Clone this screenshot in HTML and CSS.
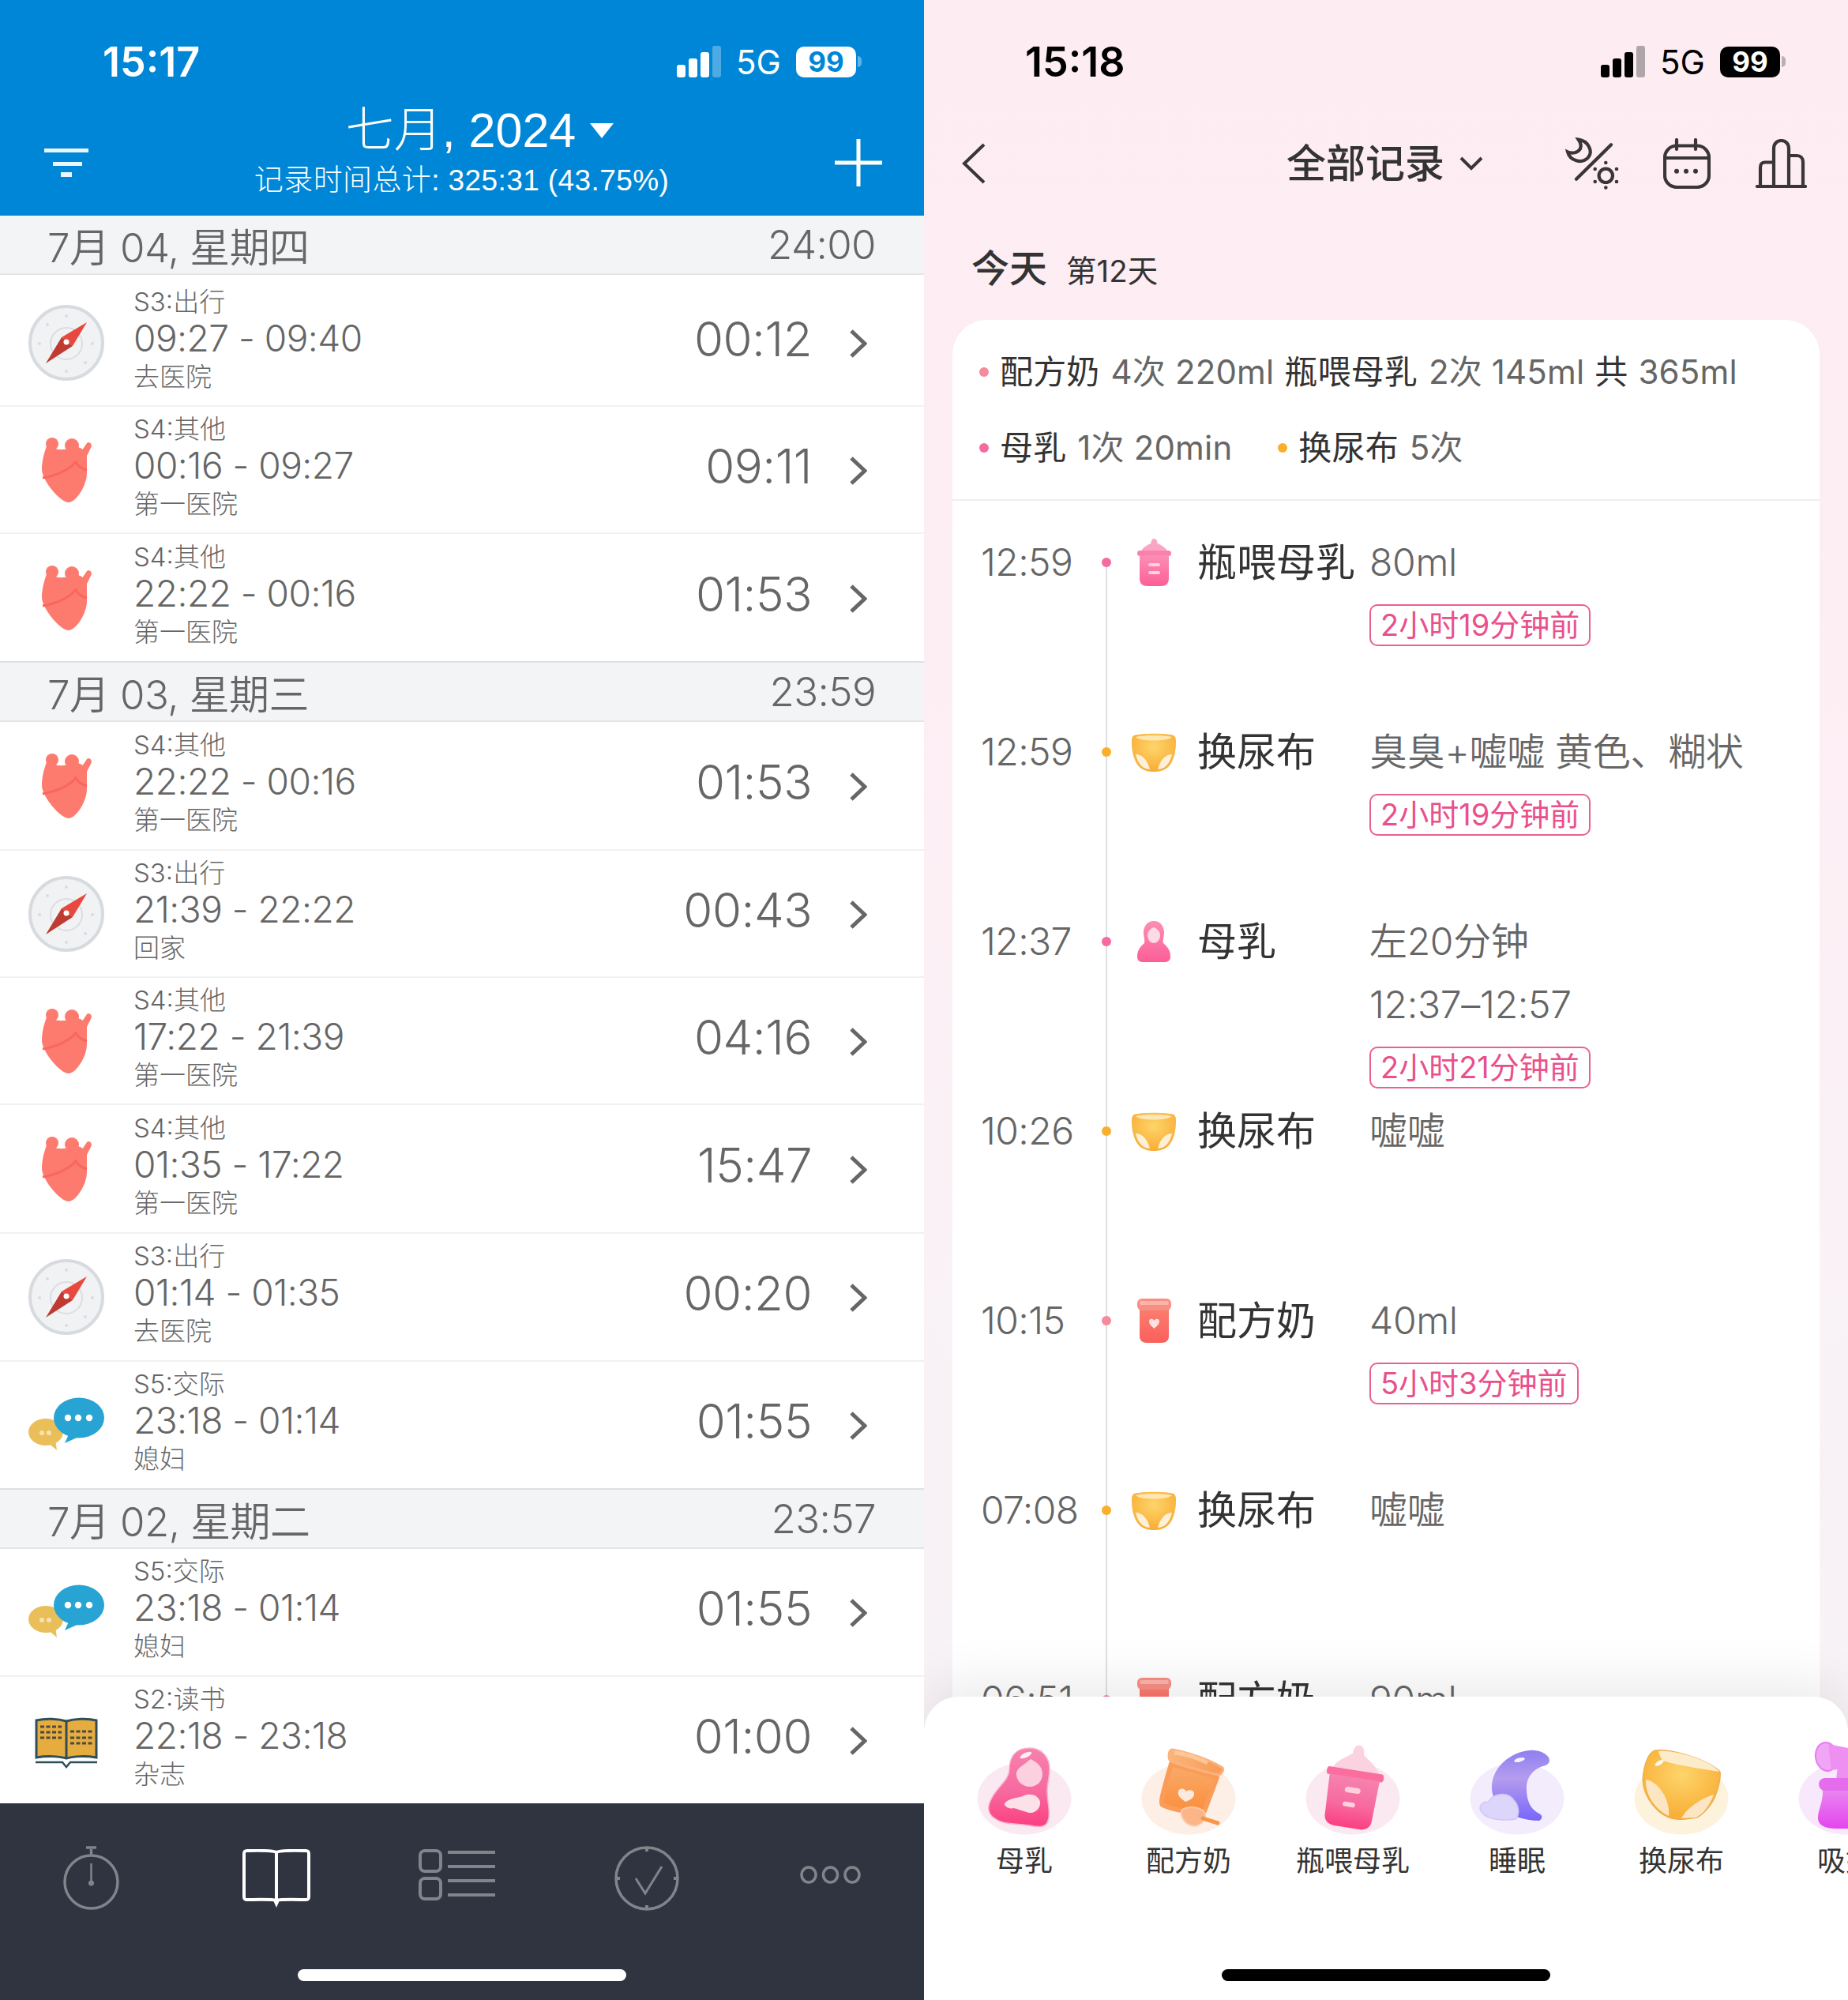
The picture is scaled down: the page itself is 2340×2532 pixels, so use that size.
FILE: index.html
```html
<!DOCTYPE html>
<html lang="zh">
<head>
<meta charset="utf-8">
<title>Records</title>
<link rel="stylesheet" href="styles.css">
</head>
<body>
<svg class="defs" xmlns="http://www.w3.org/2000/svg">
  <defs>
    <linearGradient id="gPink" x1="0" y1="0" x2="0" y2="1"><stop offset="0" stop-color="#f682ae"/><stop offset=".55" stop-color="#f76a9f"/><stop offset="1" stop-color="#fb3f80"/></linearGradient>
    <linearGradient id="gOrange" x1="0" y1="0" x2="0" y2="1"><stop offset="0" stop-color="#f9ab6a"/><stop offset="1" stop-color="#fb8f3e"/></linearGradient>
    <linearGradient id="gRim" x1="0" y1="0" x2="1" y2="0"><stop offset="0" stop-color="#fab57a"/><stop offset="1" stop-color="#f99a55"/></linearGradient>
    <linearGradient id="gMoon" x1="0" y1="0" x2="0" y2="1"><stop offset="0" stop-color="#8f7ff0"/><stop offset=".4" stop-color="#b49cee"/><stop offset="1" stop-color="#7866fa"/></linearGradient>
    <radialGradient id="gDiaper" cx=".5" cy=".35" r=".7"><stop offset="0" stop-color="#fdd56a"/><stop offset="1" stop-color="#f8a930"/></radialGradient>
    <linearGradient id="gPump" x1="0" y1="0" x2="0" y2="1"><stop offset="0" stop-color="#eb8cf2"/><stop offset="1" stop-color="#e345ee"/></linearGradient>
    <linearGradient id="gCan" x1="0" y1="0" x2="0" y2="1"><stop offset="0" stop-color="#fb7f72"/><stop offset="1" stop-color="#fb5f5b"/></linearGradient>
    <linearGradient id="gMiniBottle" x1="0" y1="0" x2="0" y2="1"><stop offset="0" stop-color="#fb8fb6"/><stop offset="1" stop-color="#fc5e96"/></linearGradient>

    <symbol id="compass" viewBox="0 0 96 96">
      <circle cx="48" cy="48" r="46" fill="#f1f2f4" stroke="#d7dbe0" stroke-width="4"/>
      <circle cx="48" cy="49" r="20" fill="none" stroke="#d9dde2" stroke-width="2"/>
      <g fill="#d9dde2"><circle cx="48" cy="14" r="2"/><circle cx="48" cy="84" r="2"/><circle cx="14" cy="49" r="2"/><circle cx="81" cy="49" r="2"/><circle cx="24" cy="25" r="2"/><circle cx="72" cy="73" r="2"/></g>
      <path d="M74 22 L56 52 L42 41 Z" fill="#e8493f"/>
      <path d="M22 74 L42 41 L56 52 Z" fill="#bf3a30"/>
      <circle cx="48" cy="47" r="3.500" fill="#fff"/>
    </symbol>
    <symbol id="heart" viewBox="0 0 96 96">
      <circle cx="30" cy="15" r="8" fill="#fd7b6e"/><circle cx="55" cy="17" r="9" fill="#fd7b6e"/>
      <path d="M66 26L74 14C77 11 82 16 79 20L72 34Z" fill="#fd7b6e"/>
      <path d="M23 18C32 22 44 24 52 20C60 16 70 20 74 28L74 52C74 68 60 89 51 89C40 89 18 62 17 48C17 36 20 26 23 18Z" fill="#fd7b6e"/>
      <path d="M18 58C35 55 50 49 60 38C62 42 66 46 74 48" fill="none" stroke="#f8675f" stroke-width="3"/>
    </symbol>
    <symbol id="chat" viewBox="0 0 96 96">
      <ellipse cx="22" cy="57" rx="22" ry="17" fill="#eabf5a"/>
      <path d="M24 70L36 80L34 66Z" fill="#eabf5a"/>
      <circle cx="17" cy="58" r="3" fill="#f7e3b0"/><circle cx="26" cy="58" r="3" fill="#f7e3b0"/>
      <ellipse cx="64" cy="39" rx="32" ry="25.500" fill="#27a4d4"/>
      <path d="M52 58L46 71L66 62Z" fill="#27a4d4"/>
      <circle cx="50" cy="39" r="4.200" fill="#fff"/><circle cx="63" cy="39" r="4.200" fill="#fff"/><circle cx="77" cy="39" r="4.200" fill="#fff"/>
    </symbol>
    <symbol id="book" viewBox="0 -14 96 96">
      <path d="M10 9C22 6 38 7 48 10C58 7 74 6 86 9V56C74 54 58 54 48 57C38 54 22 54 10 56Z" fill="#e6ac3f" stroke="#2f4f58" stroke-width="3"/>
      <path d="M48 10V57" stroke="#2f4f58" stroke-width="3"/>
      <g stroke="#4a4a40" stroke-width="3" stroke-dasharray="5 2.500"><path d="M15 17H42M15 24H42M15 31H42M53 23H81M53 31H81M53 38H81"/></g>
      <path d="M9 62H43L48 68L53 62H87" fill="none" stroke="#2f4f58" stroke-width="2.500"/>
    </symbol>

    <symbol id="miniBottle" viewBox="0 0 43 60">
      <path d="M21.500 0C24.500 0 25.500 3 25.500 6C31 8 38 12 39 19H4C5 12 12 8 17.500 6C17.500 3 18.500 0 21.500 0Z" fill="#fba5c4"/>
      <rect x="0" y="15" width="43" height="7" rx="3.500" fill="#fb80ac"/>
      <path d="M3 21H40V50C40 57 36 60 30 60H13C7 60 3 57 3 50Z" fill="url(#gMiniBottle)"/>
      <rect x="14" y="31" width="15" height="4" rx="2" fill="#fdd0df"/><rect x="14" y="41" width="15" height="4" rx="2" fill="#fdd0df"/>
    </symbol>
    <symbol id="miniDiaper" viewBox="0 0 56 49">
      <path d="M3 3C12 0 44 0 53 3C56 5 56 8 56 12C56 26 52 38 45 44C40 48 34 49 28 49C22 49 16 48 11 44C4 38 0 26 0 12C0 8 0 5 3 3Z" fill="url(#gDiaper)"/>
      <path d="M5 5C12 2.500 44 2.500 51 5C47 8.500 38 9.500 28 9.500C18 9.500 9 8.500 5 5Z" fill="#fde6b4"/>
      <path d="M5 27C13 27 20 34 23 46C15 46 8 40 5 27Z" fill="#fdf0d8"/><path d="M51 27C43 27 36 34 33 46C41 46 48 40 51 27Z" fill="#fdf0d8"/>
    </symbol>
    <symbol id="miniMother" viewBox="0 0 42 52">
      <path d="M21 0C30 0 34 8 34 14C34 20 32 24 33 28C39 33 42 38 42 45C42 50 39 52 35 52H7C3 52 0 50 0 45C0 38 3 33 9 28C10 24 8 20 8 14C8 8 12 0 21 0Z" fill="url(#gMiniBottle)"/>
      <path d="M21 8C26 10 29 14 29 18C29 24 25 28 21 28C17 28 13 24 13 18C13 14 16 10 21 8Z" fill="#fddbe6"/>
    </symbol>
    <symbol id="miniCan" viewBox="0 0 43 56">
      <path d="M3 10H40V48C40 53 36 56 31 56H12C7 56 3 53 3 48Z" fill="url(#gCan)"/>
      <rect x="0" y="0" width="43" height="15" rx="6" fill="#f98e84"/>
      <rect x="3" y="3" width="37" height="5" rx="2.500" fill="#fbb3aa"/>
      <path d="M21.500 38C17 34 15 32 15 29C15 25 20 25 21.500 28C23 25 28 25 28 29C28 32 26 34 21.500 38Z" fill="#fde3e0"/>
    </symbol>

    <symbol id="bigMother" viewBox="0 0 120 120">
      <path d="M67 8C82 8 92 20 92 34C92 46 89 52 89 62C89 78 94 90 90 100C88 108 80 108 72 107C55 103 35 106 24 98C10 90 14 78 22 66C30 54 40 48 41 36C41 18 50 8 67 8Z" fill="url(#gPink)" stroke="#fbb3cd" stroke-width="1.500"/>
      <path d="M68 22C74 25 83 30 83 41C83 50 76 57 67 57C58 57 50 50 50 41C50 33 58 31 68 22Z" fill="#fcd0de"/>
      <path d="M35 78C42 70 52 72 60 68C68 65 78 68 80 76C81 84 74 91 66 90C58 88 52 85 46 84C42 86 34 82 35 78Z" fill="#fde1e8"/>
      <ellipse cx="62" cy="17" rx="8" ry="3" transform="rotate(-25 62 17)" fill="#fff" opacity=".85"/>
    </symbol>
    <symbol id="bigCan" viewBox="0 0 120 120">
      <path d="M38 28L96 45L80 88C62 90 40 86 27 80C24 78 26 70 38 28Z" fill="url(#gOrange)" stroke="#fa9c58" stroke-width="6" stroke-linejoin="round"/>
      <path d="M39 10C58 13 88 23 103 33C105 36 102 41 98 42C80 38 54 31 38 25C34 23 34 11 39 10Z" fill="url(#gRim)" stroke="#fbb27c" stroke-width="3" stroke-linejoin="round"/>
      <path d="M42 14C56 15 72 21 84 27" fill="none" stroke="#fcd3ab" stroke-width="5" opacity=".7"/>
      <path d="M56 76C49 71 46 68 47 63C49 58 55 59 57 63C60 60 67 61 67 66C67 71 62 74 56 76Z" fill="#fdeade"/>
      <path d="M52 86C62 80 80 84 81 92C81 102 72 108 64 106C56 104 48 94 52 86Z" fill="#fbb588" stroke="#fcc8a5" stroke-width="2"/>
      <path d="M78 97L97 103" stroke="#f89648" stroke-width="5" stroke-linecap="round"/>
    </symbol>
    <symbol id="bigBottle" viewBox="0 0 120 120">
      <g transform="rotate(9 60 60)">
        <path d="M60 4C65 4 67 9 67 15C72 20 86 26 90 38H30C34 26 48 20 53 15C53 9 55 4 60 4Z" fill="#fbd3e0"/>
        <path d="M26 36H94C97 36 98 46 94 46H26C23 46 23 36 26 36Z" fill="#fb6d9f"/>
        <path d="M28 45H92L90 96C90 105 84 109 76 109H44C36 109 30 105 30 96Z" fill="url(#gPink)"/>
        <rect x="50" y="58" width="20" height="7" rx="3.500" fill="#fdd0de"/><rect x="50" y="77" width="16" height="6" rx="3" fill="#fdd0de"/>
      </g>
    </symbol>
    <symbol id="bigMoon" viewBox="0 0 120 120">
      <path d="M100 20C96 14 86 10 76 11C52 13 28 32 28 58C28 85 60 100 88 100C93 97 92 93 88 91C74 84 72 70 72 58C72 44 82 33 96 30C101 28 102 24 100 20Z" fill="url(#gMoon)"/>
      <path d="M16 90C10 84 14 76 24 76C28 66 48 62 56 74C62 80 64 92 58 98C46 100 24 100 16 90Z" fill="#dcd6fa" stroke="#cfc6f6" stroke-width="1.500"/>
      <ellipse cx="63" cy="23" rx="7" ry="2.500" transform="rotate(-15 63 23)" fill="#fff" opacity=".9"/>
    </symbol>
    <symbol id="bigDiaper" viewBox="0 0 120 120">
      <path d="M26 11C18 14 12 30 11 48C12 70 30 95 52 98C60 99 70 98 80 96C90 90 100 78 104 66C108 55 110 45 109 38C95 24 50 8 26 11Z" fill="url(#gDiaper)" stroke="#e9ad4e" stroke-width="1.200"/>
      <path d="M31 12C50 10 95 22 108 38C95 36 55 30 36 24C34 20 32 16 31 12Z" fill="#fdecca"/>
      <path d="M15 48C30 50 46 72 44 94C30 88 14 70 15 48Z" fill="#fbe5c2"/>
      <path d="M60 97C66 85 84 72 101 67C96 80 88 92 78 96Z" fill="#fbe5c2"/>
      <ellipse cx="32" cy="27" rx="6" ry="2.500" transform="rotate(-30 32 27)" fill="#fff" opacity=".9"/>
    </symbol>
    <symbol id="bigPump" viewBox="0 0 120 120">
      <path d="M50 30C60 32 70 32 84 32V48H48Z" fill="#ee8ff2"/>
      <ellipse cx="36" cy="19" rx="14" ry="18" transform="rotate(-10 36 19)" fill="#f0a6f4" stroke="#e77cf0" stroke-width="2"/>
      <path d="M38 3L84 12V30L42 36Z" fill="#ee8ff2"/>
      <path d="M30 56C34 74 24 86 25 98C26 106 34 110 48 110H98V56Z" fill="url(#gPump)"/>
      <rect x="26" y="46" width="90" height="16" rx="8" fill="#e56ded"/>
    </symbol>

    <symbol id="signal" viewBox="0 0 56 40">
      <rect x="0" y="24" width="11" height="16" rx="3"/><rect x="15" y="16" width="11" height="24" rx="3"/><rect x="30" y="8" width="11" height="32" rx="3"/><rect x="45" y="0" width="11" height="40" rx="3" opacity=".3"/>
    </symbol>
  </defs>
</svg>

<section class="panel left">
  <header class="app-head">
    <div class="status on-blue">
      <span class="clock">15:17</span>
      <span class="status-right">
        <svg class="sig"><use href="#signal"/></svg>
        <span class="net">5G</span>
        <span class="batt">99</span><i class="nub"></i>
      </span>
    </div>
    <div class="app-nav">
      <svg class="filter" viewBox="0 0 56 36"><g fill="#eaf5fc"><rect x="0" y="0" width="56" height="5"/><rect x="11" y="17" width="37" height="5"/><rect x="21" y="30" width="14" height="6"/></g></svg>
      <div class="app-title">
        <div class="month"><span>七月, 2024</span><i class="tri"></i></div>
        <div class="total">记录时间总计: 325:31 (43.75%)</div>
      </div>
      <svg class="plus" viewBox="0 0 60 60"><path d="M30 0V60M0 30H60" stroke="#fff" stroke-width="5"/></svg>
    </div>
  </header>

  <main class="list">
    <div class="day"><span>7月 04, 星期四</span><span>24:00</span></div>
    <article class="row h167"><svg class="ri"><use href="#compass"/></svg><div class="rt"><div class="cat">S3:出行</div><div class="tm">09:27 - 09:40</div><div class="note">去医院</div></div><div class="dur">00:12</div><svg class="chev" viewBox="0 0 22 36"><path d="M2 2L19 18L2 34"/></svg></article>
    <article class="row"><svg class="ri"><use href="#heart"/></svg><div class="rt"><div class="cat">S4:其他</div><div class="tm">00:16 - 09:27</div><div class="note">第一医院</div></div><div class="dur">09:11</div><svg class="chev" viewBox="0 0 22 36"><path d="M2 2L19 18L2 34"/></svg></article>
    <article class="row h163 end"><svg class="ri"><use href="#heart"/></svg><div class="rt"><div class="cat">S4:其他</div><div class="tm">22:22 - 00:16</div><div class="note">第一医院</div></div><div class="dur">01:53</div><svg class="chev" viewBox="0 0 22 36"><path d="M2 2L19 18L2 34"/></svg></article>

    <div class="day"><span>7月 03, 星期三</span><span>23:59</span></div>
    <article class="row h163"><svg class="ri"><use href="#heart"/></svg><div class="rt"><div class="cat">S4:其他</div><div class="tm">22:22 - 00:16</div><div class="note">第一医院</div></div><div class="dur">01:53</div><svg class="chev" viewBox="0 0 22 36"><path d="M2 2L19 18L2 34"/></svg></article>
    <article class="row"><svg class="ri"><use href="#compass"/></svg><div class="rt"><div class="cat">S3:出行</div><div class="tm">21:39 - 22:22</div><div class="note">回家</div></div><div class="dur">00:43</div><svg class="chev" viewBox="0 0 22 36"><path d="M2 2L19 18L2 34"/></svg></article>
    <article class="row"><svg class="ri"><use href="#heart"/></svg><div class="rt"><div class="cat">S4:其他</div><div class="tm">17:22 - 21:39</div><div class="note">第一医院</div></div><div class="dur">04:16</div><svg class="chev" viewBox="0 0 22 36"><path d="M2 2L19 18L2 34"/></svg></article>
    <article class="row h163"><svg class="ri"><use href="#heart"/></svg><div class="rt"><div class="cat">S4:其他</div><div class="tm">01:35 - 17:22</div><div class="note">第一医院</div></div><div class="dur">15:47</div><svg class="chev" viewBox="0 0 22 36"><path d="M2 2L19 18L2 34"/></svg></article>
    <article class="row h162"><svg class="ri"><use href="#compass"/></svg><div class="rt"><div class="cat">S3:出行</div><div class="tm">01:14 - 01:35</div><div class="note">去医院</div></div><div class="dur">00:20</div><svg class="chev" viewBox="0 0 22 36"><path d="M2 2L19 18L2 34"/></svg></article>
    <article class="row h162 end"><svg class="ri"><use href="#chat"/></svg><div class="rt"><div class="cat">S5:交际</div><div class="tm">23:18 - 01:14</div><div class="note">媳妇</div></div><div class="dur">01:55</div><svg class="chev" viewBox="0 0 22 36"><path d="M2 2L19 18L2 34"/></svg></article>

    <div class="day"><span>7月 02, 星期二</span><span>23:57</span></div>
    <article class="row h162"><svg class="ri"><use href="#chat"/></svg><div class="rt"><div class="cat">S5:交际</div><div class="tm">23:18 - 01:14</div><div class="note">媳妇</div></div><div class="dur">01:55</div><svg class="chev" viewBox="0 0 22 36"><path d="M2 2L19 18L2 34"/></svg></article>
    <article class="row last"><svg class="ri"><use href="#book"/></svg><div class="rt"><div class="cat">S2:读书</div><div class="tm">22:18 - 23:18</div><div class="note">杂志</div></div><div class="dur">01:00</div><svg class="chev" viewBox="0 0 22 36"><path d="M2 2L19 18L2 34"/></svg></article>
  </main>

  <nav class="tabs">
    <div class="tab-row">
      <svg class="t-watch" viewBox="0 0 71 81" fill="none" stroke="#80848b" stroke-width="3.500"><circle cx="35.500" cy="45.500" r="33.500"/><path d="M35.500 12V4M29 2H42" /><path d="M35.500 22V44" stroke-width="2.500"/><circle cx="35.500" cy="47" r="3.500" fill="#80848b" stroke="none"/></svg>
      <svg class="t-book" viewBox="0 0 86 74" fill="none" stroke="#fff" stroke-width="4"><path d="M43 4C37 1 10 2 6 2C3 2 2 3 2 6V60C2 63 3 64 6 64C14 64 37 63 43 65C49 63 72 64 80 64C83 64 84 63 84 60V6C84 3 83 2 80 2C76 2 49 1 43 4ZM43 4V65"/><path d="M39 65H47L43 74Z" fill="#fff" stroke="none"/></svg>
      <svg class="t-list" viewBox="0 0 97 65" fill="none" stroke="#80848b" stroke-width="4"><rect x="2" y="2" width="26" height="26" rx="6"/><rect x="2" y="37" width="26" height="26" rx="6"/><path d="M37 4H97M37 22H97M37 40H97M37 58H97"/></svg>
      <svg class="t-check" viewBox="0 0 82 82" fill="none" stroke="#80848b" stroke-width="3.500"><circle cx="41" cy="41" r="39"/><path d="M41 2V7M41 75V80M2 41H7M75 41H80" stroke-width="4"/><path d="M27 41L39 60L60 26" stroke-width="3"/></svg>
      <svg class="t-dots" viewBox="0 0 77 23" fill="none" stroke="#80848b" stroke-width="3.500"><ellipse cx="11" cy="11.500" rx="9" ry="9.500"/><ellipse cx="38.500" cy="11.500" rx="9" ry="9.500"/><ellipse cx="66" cy="11.500" rx="9" ry="9.500"/></svg>
    </div>
    <div class="home-bar light"></div>
  </nav>
</section>

<section class="panel right">
  <div class="status on-pink">
    <span class="clock">15:18</span>
    <span class="status-right">
      <svg class="sig"><use href="#signal"/></svg>
      <span class="net">5G</span>
      <span class="batt">99</span><i class="nub"></i>
    </span>
  </div>
  <div class="rec-nav">
    <svg class="back" viewBox="0 0 30 52"><path d="M28 2L3 26L28 50"/></svg>
    <div class="rec-title">全部记录</div>
    <svg class="down" viewBox="0 0 32 18"><path d="M3 2L16 15L29 2"/></svg>
    <svg class="ni moon" viewBox="0 0 70 66" fill="none"><path d="M17.700 2.700C30 4.300 36.700 17.700 30 25.300C21.700 34.300 6.700 29.300 4 18.300C10 21 16.700 19.300 20 14.300C21.700 10 20 6 17.700 2.700Z"/><path d="M15 52.700L59 9.300"/><circle cx="52.300" cy="48.300" r="8.700"/><g fill="#3a3536" stroke="none"><circle cx="52.300" cy="32" r="2.300"/><circle cx="66" cy="40" r="2.300"/><circle cx="66" cy="56" r="2.300"/><circle cx="52.300" cy="63.500" r="2.300"/><circle cx="38.700" cy="56" r="2.300"/><circle cx="38.700" cy="40" r="2.300"/></g></svg>
    <svg class="ni cal" viewBox="0 0 60 64" fill="none"><rect x="2" y="9.500" width="56" height="52.500" rx="15"/><path d="M17 2V14M41 2V14M2 25H58"/><g fill="#3a3536" stroke="none"><circle cx="17" cy="41.700" r="3"/><circle cx="29" cy="41.700" r="3"/><circle cx="41" cy="41.700" r="3"/></g></svg>
    <svg class="ni chart" viewBox="0 0 65 62" fill="none"><path d="M2 60H63"/><path d="M6 60V36C6 32 8 29.500 12 29.500H23M23 60V12C23 6 27 2 32.500 2C38 2 42 6 42 12V60M42 21H52C57 21 60 24 60 29V60"/></svg>
  </div>
  <div class="today"><span class="t-big">今天</span><span class="t-small">第12天</span></div>

  <div class="card">
    <div class="summary">
      <div class="sum-line"><i class="dot coral"></i><b>配方奶</b><span class="m1">4次</span><span class="m2">220ml</span><b class="m3">瓶喂母乳</b><span class="m1">2次</span><span class="m2">145ml</span><b class="m3">共</b><span class="m3">365ml</span></div>
      <div class="sum-line"><i class="dot pink"></i><b>母乳</b><span class="m1">1次</span><span class="m2">20min</span><i class="dot amber gap"></i><b>换尿布</b><span class="m1">5次</span></div>
    </div>
    <div class="timeline">
      <div class="tl-row"><div class="tl-time">12:59</div><div class="tl-axis pink"><i></i></div><div class="tl-ibox"><svg class="mi-bottle"><use href="#miniBottle"/></svg></div><div class="tl-name">瓶喂母乳</div><div class="tl-val"><div>80ml</div><div class="tl-tagline"><span class="tag">2小时19分钟前</span></div></div></div>
      <div class="tl-row"><div class="tl-time">12:59</div><div class="tl-axis amber"><i></i></div><div class="tl-ibox"><svg class="mi-diaper"><use href="#miniDiaper"/></svg></div><div class="tl-name">换尿布</div><div class="tl-val"><div>臭臭+嘘嘘 黄色、糊状</div><div class="tl-tagline"><span class="tag">2小时19分钟前</span></div></div></div>
      <div class="tl-row"><div class="tl-time">12:37</div><div class="tl-axis pink"><i></i></div><div class="tl-ibox"><svg class="mi-mother"><use href="#miniMother"/></svg></div><div class="tl-name">母乳</div><div class="tl-val"><div>左20分钟</div><div>12:37–12:57</div><div class="tl-tagline"><span class="tag">2小时21分钟前</span></div></div></div>
      <div class="tl-row"><div class="tl-time">10:26</div><div class="tl-axis amber"><i></i></div><div class="tl-ibox"><svg class="mi-diaper"><use href="#miniDiaper"/></svg></div><div class="tl-name">换尿布</div><div class="tl-val"><div>嘘嘘</div></div></div>
      <div class="tl-row"><div class="tl-time">10:15</div><div class="tl-axis coral"><i></i></div><div class="tl-ibox"><svg class="mi-can"><use href="#miniCan"/></svg></div><div class="tl-name">配方奶</div><div class="tl-val"><div>40ml</div><div class="tl-tagline"><span class="tag">5小时3分钟前</span></div></div></div>
      <div class="tl-row"><div class="tl-time">07:08</div><div class="tl-axis amber"><i></i></div><div class="tl-ibox"><svg class="mi-diaper"><use href="#miniDiaper"/></svg></div><div class="tl-name">换尿布</div><div class="tl-val"><div>嘘嘘</div></div></div>
      <div class="tl-row"><div class="tl-time">06:51</div><div class="tl-axis coral"><i></i></div><div class="tl-ibox"><svg class="mi-can"><use href="#miniCan"/></svg></div><div class="tl-name">配方奶</div><div class="tl-val"><div>90ml</div></div></div>
    </div>
  </div>

  <div class="sheet">
    <div class="shortcuts">
      <div class="sc"><svg class="sc-i bg-pink"><use href="#bigMother"/></svg><span>母乳</span></div>
      <div class="sc"><svg class="sc-i bg-peach"><use href="#bigCan"/></svg><span>配方奶</span></div>
      <div class="sc"><svg class="sc-i bg-pink"><use href="#bigBottle"/></svg><span>瓶喂母乳</span></div>
      <div class="sc"><svg class="sc-i bg-lilac"><use href="#bigMoon"/></svg><span>睡眠</span></div>
      <div class="sc"><svg class="sc-i bg-cream"><use href="#bigDiaper"/></svg><span>换尿布</span></div>
      <div class="sc"><svg class="sc-i bg-mauve"><use href="#bigPump"/></svg><span>吸奶</span></div>
    </div>
    <div class="home-bar dark"></div>
  </div>
</section>
</body>
</html>
```
FILE: styles.css
```css
* { box-sizing: border-box; }
html, body { margin: 0; padding: 0; }
body {
  width: 2340px;
  height: 2532px;
  display: flex;
  overflow: hidden;
  font-family: Inter, "Noto Sans CJK SC", sans-serif;
  background: #fff;
}
.defs { position: absolute; width: 0; height: 0; }
.panel {
  width: 1170px;
  height: 2532px;
  display: flex;
  flex-direction: column;
  overflow: hidden;
  position: relative;
}

/* status bar */
.status {
  height: 98px;
  padding: 58px 79px 0 130px;
  display: flex;
  justify-content: space-between;
  align-items: center;
  flex: none;
}
.clock { font-size: 52px; font-weight: 600; line-height: 41px; }
.status-right { display: flex; align-items: center; }
.sig { width: 58px; height: 40px; margin-right: 18px; fill: currentColor; }
.net { font-size: 42px; line-height: 41px; width: 76px; }
.batt {
  width: 76px;
  height: 39px;
  border-radius: 10px;
  font-size: 35px;
  font-weight: 700;
  line-height: 39px;
  text-align: center;
}
.nub { width: 5px; height: 14px; border-radius: 0 5px 5px 0; margin-left: 2px; }
.on-blue { color: #fff; }
.on-blue .batt { background: #fff; color: #0086d6; }
.on-blue .nub { background: #5fb4e6; }
.on-pink { color: #000; }
.on-pink .batt { background: #000; color: #fff; }
.on-pink .nub { background: #b9b0b4; }
.on-pink .clock { margin-left: -2px; }

/* left header */
.app-head { height: 273px; background: #0086d6; flex: none; }
.app-nav {
  height: 175px;
  padding: 32px 53px 0 56px;
  display: flex;
  justify-content: space-between;
  align-items: flex-end;
}
.filter { width: 56px; height: 36px; margin-bottom: 49px; }
.plus { width: 60px; height: 60px; margin-bottom: 37px; }
.app-title {
  color: #fff;
  display: flex;
  flex-direction: column;
  align-items: center;
  padding-bottom: 19px;
  font-family: "Liberation Sans", "Noto Sans CJK SC", sans-serif;
}
.month { font-size: 61px; line-height: 70px; display: flex; align-items: center; font-weight: 300; padding-left: 46px; }
.tri {
  width: 0; height: 0; margin-left: 18px;
  border-left: 15px solid transparent;
  border-right: 15px solid transparent;
  border-top: 19px solid #fff;
}
.total { font-size: 37px; line-height: 50px; margin-top: 4px; font-weight: 300; letter-spacing: .4px; }

/* left list */
.list { flex: 1; background: #fff; display: flex; flex-direction: column; min-height: 0; }
.day {
  height: 75px;
  flex: none;
  background: #f3f4f6;
  border-bottom: 2px solid #e4e5e7;
  padding: 0 61px 0 60px;
  display: flex;
  justify-content: space-between;
  align-items: center;
  font-size: 51px;
  letter-spacing: -.6px;
  font-weight: 350;
  color: #666;
}
.row {
  height: 161px;
  flex: none;
  display: flex;
  align-items: center;
  padding: 0 72px 6px 36px;
  border-bottom: 2px solid #f1f1f2;
  color: #666;
}
.row.h167 { height: 167px; padding-top: 6px; }
.row.h163 { height: 163px; }
.row.h162 { height: 162px; }
.row.last { height: auto; flex: 1; border-bottom: 0; }
.row.end { border-bottom: 2px solid #dfe0e2; }
.ri { width: 96px; height: 96px; margin: 6px 37px 0 0; flex: none; }
.rt { flex: 1; }
.cat { font-size: 33px; line-height: 44px; font-weight: 300; }
.note { font-size: 33px; line-height: 50px; font-weight: 300; }
.tm { font-size: 46px; line-height: 48px; letter-spacing: -.5px; font-weight: 350; }
.dur { font-size: 60px; letter-spacing: -.5px; line-height: 70px; margin-bottom: 4px; font-weight: 350; }
.chev { width: 22px; height: 36px; margin: 8px 0 0 48px; fill: none; stroke: #666; stroke-width: 5; }

/* tab bar */
.tabs { height: 249px; background: #2f3440; flex: none; display: flex; flex-direction: column; align-items: center; }
.tab-row {
  height: 95px;
  margin-top: 47px;
  width: 100%;
  display: grid;
  grid-template-columns: repeat(5, 1fr);
  justify-items: center;
  align-items: center;
}
.t-watch { width: 71px; height: 81px; margin-right: 4px; }
.t-book { width: 86px; height: 74px; margin-right: 2px; }
.t-list { width: 97px; height: 65px; margin-right: 13px; margin-bottom: 8px; }
.t-check { width: 82px; height: 82px; }
.t-dots { width: 77px; height: 23px; margin-bottom: 8px; margin-right: 3px; }
.home-bar { width: 416px; height: 15px; border-radius: 8px; margin-top: auto; margin-bottom: 24px; flex: none; }
.home-bar.light { background: #fff; }
.home-bar.dark { background: #000; }

/* right panel */
.right { background: linear-gradient(180deg, #fdedf3 0%, #fdeef4 35%, #f9f2f6 65%, #f6f3f5 100%); }
.rec-nav { height: 162px; margin-top: 28px; padding-left: 48px; display: flex; align-items: center; color: #333; flex: none; }
.back { width: 30px; height: 52px; fill: none; stroke: #3a3536; stroke-width: 4; }
.rec-title { margin-left: 381px; font-size: 50px; font-weight: 500; line-height: 60px; }
.down { width: 32px; height: 18px; margin-left: 18px; fill: none; stroke: #3a3536; stroke-width: 4; }
.ni { stroke: #3a3536; stroke-width: 4.200; stroke-linecap: round; flex: none; }
.moon { width: 70px; height: 66px; margin-left: 102px; }
.cal { width: 60px; height: 64px; margin-left: 55px; }
.chart { width: 65px; height: 62px; margin-left: 57px; }

.today { height: 70px; margin: 17px 0 30px 60px; display: flex; align-items: baseline; color: #333; flex: none; }
.t-big { font-size: 48px; font-weight: 500; line-height: 70px; }
.t-small { font-size: 38.500px; margin-left: 24px; }

.card { flex: 1; margin: 0 36px; background: #fff; border-radius: 44px 44px 0 0; min-height: 0; }
.summary { padding: 18px 0 17px 34px; border-bottom: 2px solid #efeff1; }
.sum-line { height: 96px; display: flex; align-items: baseline; font-size: 42px; line-height: 96px; letter-spacing: .15px; color: #666; }
.sum-line b { font-weight: 400; color: #333; }
.dot { width: 12px; height: 12px; border-radius: 50%; margin-right: 14px; flex: none; align-self: center; }
.dot.coral { background: #f58a9b; }
.dot.pink { background: #f76a9f; }
.dot.amber { background: #f9ae2c; }
.dot.gap { margin-left: 58px; }
.m1 { margin-left: 14px; }
.m2 { margin-left: 12px; }
.m3 { margin-left: 13px; }

.timeline { padding-top: 38px; }
.tl-row { height: 240px; display: flex; padding-left: 36px; }
.tl-time { width: 152px; font-size: 48px; line-height: 80px; letter-spacing: -.6px; font-weight: 350; color: #666; flex: none; }
.tl-axis { width: 14px; flex: none; position: relative; }
.tl-axis::before { content: ""; position: absolute; left: 6px; top: 40px; width: 2px; height: 240px; background: #e0e0e2; }
.tl-axis i { position: absolute; left: 1px; top: 34px; width: 12px; height: 12px; border-radius: 50%; }
.tl-axis.pink i { background: #f76a9f; }
.tl-axis.coral i { background: #f58a9b; }
.tl-axis.amber i { background: #f9ae2c; }
.tl-ibox { width: 60px; height: 80px; margin-left: 23px; flex: none; display: flex; align-items: center; justify-content: center; }
.mi-bottle { width: 43px; height: 60px; }
.mi-diaper { width: 56px; height: 49px; }
.mi-mother { width: 42px; height: 52px; }
.mi-can { width: 43px; height: 56px; }
.tl-name { width: 218px; margin-left: 25px; font-size: 50px; line-height: 80px; color: #333; flex: none; }
.tl-val { font-size: 48px; line-height: 80px; letter-spacing: -.3px; font-weight: 350; color: #666; }
.tl-tagline { height: 78px; display: flex; align-items: center; }
.tag {
  display: inline-block;
  height: 53px;
  line-height: 49px;
  padding: 0 12px;
  border: 2px solid #eb5f95;
  border-radius: 10px;
  font-size: 38px;
  letter-spacing: 0;
  font-weight: 400;
  color: #e9508c;
}

/* bottom sheet */
.sheet {
  position: absolute;
  left: 0;
  right: 0;
  bottom: 0;
  height: 384px;
  background: #fff;
  border-radius: 44px 44px 0 0;
  box-shadow: 0 -14px 70px rgba(0, 0, 0, .09);
  display: flex;
  flex-direction: column;
  align-items: center;
}
.shortcuts { display: flex; align-self: stretch; padding: 57px 0 0 23px; }
.sc { width: 208px; flex: none; display: flex; flex-direction: column; align-items: center; }
.sc-i { width: 120px; height: 120px; overflow: visible; background-repeat: no-repeat; }
.bg-pink { background: radial-gradient(60px 46px at 60px 72px, #fbe9f1 98%, transparent 100%); }
.bg-peach { background: radial-gradient(60px 46px at 60px 72px, #fdeee6 98%, transparent 100%); }
.bg-lilac { background: radial-gradient(60px 46px at 60px 72px, #f3ecfd 98%, transparent 100%); }
.bg-cream { background: radial-gradient(60px 46px at 60px 72px, #fdf3dd 98%, transparent 100%); }
.bg-mauve { background: radial-gradient(60px 46px at 60px 72px, #f8e8fb 98%, transparent 100%); }
.sc span { margin-top: 6px; font-size: 36px; line-height: 50px; color: #333; white-space: nowrap; }
```
